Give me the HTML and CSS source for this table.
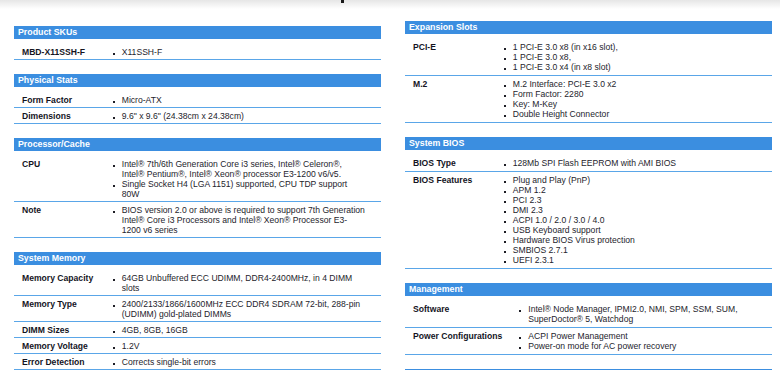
FILE: index.html
```html
<!DOCTYPE html>
<html lang="en">
<head>
<meta charset="utf-8">
<title>X11SSH-F Specifications</title>
<link rel="stylesheet" href="styles.css">
</head>
<body>
<div class="topbar"><span class="topbar-mark"></span></div>
<div class="columns">
  <div class="col col-left">
    <section class="spec">
      <h2 class="spec-head">Product SKUs</h2>
      <table class="spec-table">
        <tr><td class="lbl">MBD-X11SSH-F</td><td class="val"><ul><li>X11SSH-F</li></ul></td></tr>
      </table>
    </section>
    <section class="spec">
      <h2 class="spec-head">Physical Stats</h2>
      <table class="spec-table">
        <tr><td class="lbl">Form Factor</td><td class="val"><ul><li>Micro-ATX</li></ul></td></tr>
        <tr><td class="lbl">Dimensions</td><td class="val"><ul><li>9.6" x 9.6" (24.38cm x 24.38cm)</li></ul></td></tr>
      </table>
    </section>
    <section class="spec">
      <h2 class="spec-head">Processor/Cache</h2>
      <table class="spec-table">
        <tr><td class="lbl">CPU</td><td class="val"><ul><li>Intel® 7th/6th Generation Core i3 series, Intel® Celeron®, Intel® Pentium®, Intel® Xeon® processor E3-1200 v6/v5.</li><li>Single Socket H4 (LGA 1151) supported, CPU TDP support 80W</li></ul></td></tr>
        <tr><td class="lbl">Note</td><td class="val"><ul><li>BIOS version 2.0 or above is required to support 7th Generation Intel® Core i3 Processors and Intel® Xeon® Processor E3-1200 v6 series</li></ul></td></tr>
      </table>
    </section>
    <section class="spec">
      <h2 class="spec-head">System Memory</h2>
      <table class="spec-table">
        <tr><td class="lbl">Memory Capacity</td><td class="val"><ul><li>64GB Unbuffered ECC UDIMM, DDR4-2400MHz, in 4 DIMM slots</li></ul></td></tr>
        <tr><td class="lbl">Memory Type</td><td class="val"><ul><li>2400/2133/1866/1600MHz ECC DDR4 SDRAM 72-bit, 288-pin (UDIMM) gold-plated DIMMs</li></ul></td></tr>
        <tr><td class="lbl">DIMM Sizes</td><td class="val"><ul><li>4GB, 8GB, 16GB</li></ul></td></tr>
        <tr><td class="lbl">Memory Voltage</td><td class="val"><ul><li>1.2V</li></ul></td></tr>
        <tr><td class="lbl">Error Detection</td><td class="val"><ul><li>Corrects single-bit errors</li></ul></td></tr>
      </table>
    </section>
  </div>
  <div class="col col-right">
    <section class="spec">
      <h2 class="spec-head">Expansion Slots</h2>
      <table class="spec-table">
        <tr><td class="lbl">PCI-E</td><td class="val"><ul><li>1 PCI-E 3.0 x8 (in x16 slot),</li><li>1 PCI-E 3.0 x8,</li><li>1 PCI-E 3.0 x4 (in x8 slot)</li></ul></td></tr>
        <tr><td class="lbl">M.2</td><td class="val"><ul><li>M.2 Interface: PCI-E 3.0 x2</li><li>Form Factor: 2280</li><li>Key: M-Key</li><li>Double Height Connector</li></ul></td></tr>
      </table>
    </section>
    <section class="spec">
      <h2 class="spec-head">System BIOS</h2>
      <table class="spec-table">
        <tr><td class="lbl">BIOS Type</td><td class="val"><ul><li>128Mb SPI Flash EEPROM with AMI BIOS</li></ul></td></tr>
        <tr><td class="lbl">BIOS Features</td><td class="val"><ul><li>Plug and Play (PnP)</li><li>APM 1.2</li><li>PCI 2.3</li><li>DMI 2.3</li><li>ACPI 1.0 / 2.0 / 3.0 / 4.0</li><li>USB Keyboard support</li><li>Hardware BIOS Virus protection</li><li>SMBIOS 2.7.1</li><li>UEFI 2.3.1</li></ul></td></tr>
      </table>
    </section>
    <section class="spec">
      <h2 class="spec-head">Management</h2>
      <table class="spec-table">
        <tr><td class="lbl">Software</td><td class="val"><ul><li>Intel® Node Manager, IPMI2.0, NMI, SPM, SSM, SUM, SuperDoctor® 5, Watchdog</li></ul></td></tr>
        <tr><td class="lbl">Power Configurations</td><td class="val"><ul><li>ACPI Power Management</li><li>Power-on mode for AC power recovery</li></ul></td></tr>
      </table>
    </section>
    <div class="spec-head spec-head--next"></div>
  </div>
</div>
</body>
</html>
```

FILE: styles.css
```css
* { box-sizing: border-box; }

html, body {
  margin: 0;
  padding: 0;
  background: #ffffff;
  overflow: hidden;
}

body {
  font-family: "Liberation Sans", Arial, sans-serif;
  font-size: 8.6px;
  color: #222229;
}

.topbar {
  height: 9px;
  background: linear-gradient(#e6e6e6, #ffffff);
  padding-left: 341px;
}

.topbar-mark {
  display: block;
  width: 3px;
  height: 3px;
  background: #1a1a1a;
}

.columns {
  display: flex;
  align-items: flex-start;
  gap: 24px;
  padding: 0 9px 0 14px;
}

.col {
  flex: 0 0 367px;
  width: 367px;
}

.col-left { padding-top: 17px; }
.col-right { padding-top: 12px; }

.spec { margin-bottom: 14px; }

.spec-head {
  margin: 0;
  height: 13px;
  line-height: 13px;
  padding-left: 4px;
  background: #3b8ee0;
  color: #ffffff;
  font-size: 8.8px;
  font-weight: bold;
}

.spec-table {
  width: 100%;
  margin-top: 5px;
  border-collapse: collapse;
  border-spacing: 0;
}

.spec-table td {
  vertical-align: top;
  padding: 3px 0 2px 0;
  line-height: 10px;
  border-bottom: 1px solid #5aa6e8;
}

.col-right .spec-table td {
  padding-bottom: 3px;
}

.lbl {
  width: 25%;
  padding-left: 8px !important;
  padding-right: 10px !important;
  white-space: nowrap;
  font-weight: bold;
  color: #14141e;
}

.val {
  padding-right: 15px !important;
  color: #24242c;
}

.val ul {
  margin: 0;
  padding: 0;
  list-style: none;
}

.val li {
  display: flex;
  gap: 7px;
}

.val li::before {
  content: "";
  flex: none;
  width: 2px;
  height: 2px;
  margin: 6px 0 0 7px;
  background: #1e1e26;
}
```
